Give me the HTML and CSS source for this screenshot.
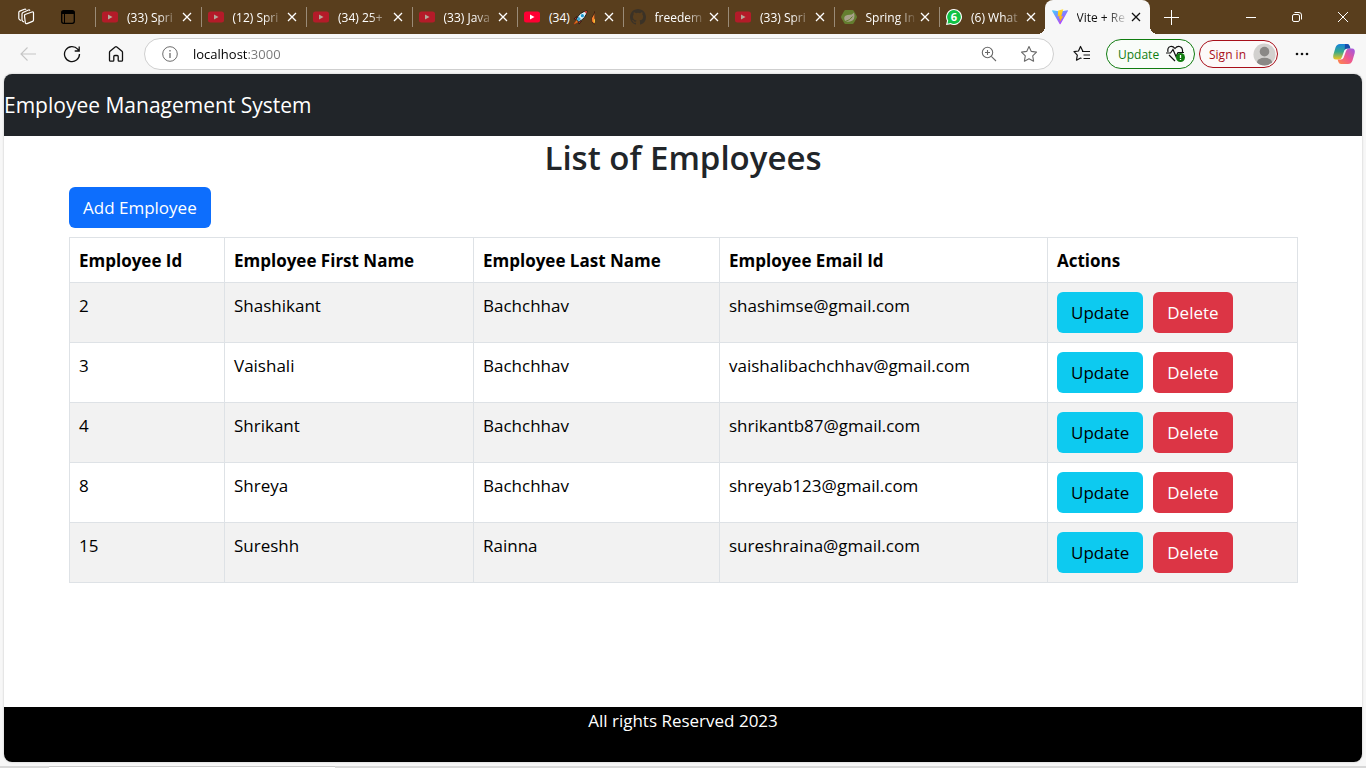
FILE: index.html
```html
<!DOCTYPE html>
<html lang="en">
<head>
<meta charset="utf-8">
<title>Vite + React</title>
<link rel="stylesheet" href="styles.css">
</head>
<body>
<svg class="sprite" aria-hidden="true">
  <symbol id="youtube" viewBox="0 0 16 16"><rect y="2.500" width="16" height="11" rx="2.500" fill="#ff0033"/><path d="M6 5.500v5l4.500-2.500z" fill="#fff"/></symbol>
  <symbol id="cross" viewBox="0 0 10 10"><path d="M1 1l8 8M9 1l-8 8" fill="none" stroke="currentColor" stroke-width="1.300"/></symbol>
  <symbol id="star" viewBox="0 0 18 18"><path d="M9 1.500l2.300 4.900 5.200.7-3.800 3.700.9 5.400L9 13.700l-4.600 2.500.9-5.400L1.500 7.100l5.200-.7z" fill="none" stroke="currentColor" stroke-width="1.100" stroke-linejoin="round"/></symbol>
</svg>

<div class="browser">
  <header class="titlebar">
    <div class="tab-tools">
      <button class="tool" aria-label="Workspaces"><svg width="18" height="18" viewBox="0 0 18 18" fill="none" stroke="#fff" stroke-width="1.200" stroke-linejoin="round"><path d="M8 6.500l7-2.500q1.500-.3 1.500 1v7q0 1-1 1.400l-5.500 2.200q-1.500.4-1.700-1L7.500 8q0-1 .5-1.500z"/><path d="M7 14l-1.200-.7q-.8-.5-.8-1.500V6q0-1 1-1.500L11.500 2q1-.3 1.500.6M4 12.500l-1.300-.8q-.9-.6-.9-1.500V4.500q0-1 1-1.400L7.500 1.200q1-.3 1.600.4"/></svg></button>
      <button class="tool" aria-label="Tab actions"><svg width="16" height="16" viewBox="0 0 16 16"><rect x="1.700" y="1.700" width="12.600" height="12.600" rx="2" fill="none" stroke="#000" stroke-width="1.300"/><path d="M2 2.500h12v2H2z" fill="#000" stroke="#000"/><path d="M4.500 5v9" stroke="#000"/></svg></button>
    </div>
    <nav class="tabs" aria-label="Open tabs">
      <div class="tab idle"><svg class="favicon"><use href="#youtube"/></svg><button class="name">(33) Spri</button><button class="close" aria-label="Close tab"><svg><use href="#cross"/></svg></button></div>
      <div class="tab idle"><svg class="favicon"><use href="#youtube"/></svg><button class="name">(12) Spri</button><button class="close" aria-label="Close tab"><svg><use href="#cross"/></svg></button></div>
      <div class="tab idle"><svg class="favicon"><use href="#youtube"/></svg><button class="name">(34) 25+</button><button class="close" aria-label="Close tab"><svg><use href="#cross"/></svg></button></div>
      <div class="tab idle"><svg class="favicon"><use href="#youtube"/></svg><button class="name">(33) Java</button><button class="close" aria-label="Close tab"><svg><use href="#cross"/></svg></button></div>
      <div class="tab"><svg class="favicon"><use href="#youtube"/></svg><button class="name plain">(34) <svg class="emoji" viewBox="0 0 16 16"><path d="M4 7L1 9.500l3 .5zM9 12l-2.500 3-.5-3.500z" fill="#e23d35" stroke="#111" stroke-width=".7"/><path d="M4 11l-3 4 4-2z" fill="#ff9b25" stroke="#c74415" stroke-width=".8"/><path d="M3.500 10Q7 2 15 1q-1 8-9 11.500z" fill="#dff2fa" stroke="#111" stroke-width=".9"/><path d="M12 1.700L15 1l-.8 3z" fill="#e23d35"/><circle cx="10" cy="6" r="1.700" fill="#1598d4"/><path d="M4 10l2-3 2.500 2.500L6 12z" fill="#39a8d5"/></svg><svg class="emoji flame" viewBox="0 0 4 16"><path d="M4 1.500Q3.500 4 2 6-.5 8.500.6 12q.8 2.300 3.400 3z" fill="#f9822b" stroke="#351b12" stroke-width=".8"/><path d="M4 9q-2.500 3 0 5z" fill="#ffd43b"/></svg></button><button class="close" aria-label="Close tab"><svg><use href="#cross"/></svg></button></div>
      <div class="tab idle"><svg class="favicon" viewBox="0 0 16 16"><path fill="#24292f" d="M8 0C3.580 0 0 3.580 0 8c0 3.540 2.290 6.530 5.470 7.590.4.070.55-.17.55-.38v-1.490c-2.010.37-2.530-.49-2.690-.94-.09-.23-.48-.94-.82-1.130-.28-.15-.68-.52-.01-.53.63-.01 1.080.58 1.230.82.72 1.210 1.870.87 2.330.66.07-.52.28-.87.51-1.070-1.780-.2-3.640-.89-3.640-3.950 0-.87.31-1.590.82-2.150-.08-.2-.36-1.020.08-2.120 0 0 .67-.21 2.200.82a7.600 7.600 0 014 0c1.530-1.040 2.200-.82 2.200-.82.44 1.100.16 1.920.08 2.120.51.56.82 1.270.82 2.150 0 3.070-1.870 3.750-3.650 3.950.29.25.54.73.54 1.480v2.200c0 .21.15.46.55.38A8 8 0 0016 8c0-4.420-3.580-8-8-8z"/></svg><button class="name">freedem</button><button class="close" aria-label="Close tab"><svg><use href="#cross"/></svg></button></div>
      <div class="tab idle"><svg class="favicon"><use href="#youtube"/></svg><button class="name">(33) Spri</button><button class="close" aria-label="Close tab"><svg><use href="#cross"/></svg></button></div>
      <div class="tab idle"><svg class="favicon" viewBox="0 0 16 16"><path d="M4.500 1h7q.8 0 1.200.7l3 5.300q.5 1 0 1.900l-3 5.300q-.4.8-1.200.8h-7q-.8 0-1.200-.8l-3-5.300q-.4-.9 0-1.900l3-5.300Q3.700 1 4.500 1z" fill="#6db33f"/><path d="M13 3.500q2 8-4 9-3 .5-5-.5Q1.500 7 6.500 6q5 0 6.500-2.500z" fill="#e9f3e3"/><path d="M4 12.500q5-1 7.500-5" fill="none" stroke="#6db33f"/></svg><button class="name">Spring In</button><button class="close" aria-label="Close tab"><svg><use href="#cross"/></svg></button></div>
      <div class="tab"><svg class="favicon" viewBox="0 0 16 16"><path d="M8 0A8 8 0 11 4.500 15.200L0 16l1-4.200A8 8 0 018 0z" fill="#fff"/><path d="M8 1.100A6.900 6.900 0 11 4.700 14.100l-3.200.6.700-3.100A6.900 6.900 0 018 1.100z" fill="#11c245"/><text x="8" y="12" text-anchor="middle" class="count">6</text></svg><button class="name">(6) What</button><button class="close" aria-label="Close tab"><svg><use href="#cross"/></svg></button></div>
      <div class="tab active"><svg class="favicon" viewBox="0 0 16 16"><defs><linearGradient id="vp" x1="0" y1="0" x2=".7" y2="1"><stop stop-color="#41d1ff"/><stop offset="1" stop-color="#bd34fe"/></linearGradient><linearGradient id="vy" x1="0" y1="0" x2="0" y2="1"><stop stop-color="#ffdc2e"/><stop offset="1" stop-color="#ffa800"/></linearGradient></defs><path d="M.5 1.200L8.200 2.500l7.300-1.300q.7 0 .4.700L8.600 15q-.5.700-1 0L.1 1.900q-.2-.6.4-.7z" fill="url(#vp)"/><path d="M11.300.3L6.200 1.400l-.5 6 1.800-.3-.5 2.600 1.300-.3-.7 3.900 3.600-6-2 .3z" fill="url(#vy)"/></svg><button class="name">Vite + Re</button><button class="close" aria-label="Close tab"><svg><use href="#cross"/></svg></button></div>
    </nav>
    <div class="window-tools">
      <button class="tool new-tab" aria-label="New tab"><svg width="15" height="15" viewBox="0 0 15 15" stroke="#fff"><path d="M7.500 0v15M0 7.500h15"/></svg></button>
      <button class="tool control" aria-label="Minimize"><svg width="10" height="10" viewBox="0 0 10 10" stroke="#fff"><path d="M0 5.500h10"/></svg></button>
      <button class="tool control" aria-label="Restore"><svg width="10" height="10" viewBox="0 0 10 10" fill="none" stroke="#fff"><rect x=".5" y="2.500" width="7" height="7" rx="1.500"/><path d="M2.500.5H7q2.500 0 2.500 2.500v4.500"/></svg></button>
      <button class="tool control" aria-label="Close"><svg width="10" height="10" viewBox="0 0 10 10" stroke="#fff"><path d="M0 0l10 10M10 0L0 10"/></svg></button>
    </div>
  </header>

  <div class="toolbar">
    <div class="history">
      <button class="tool" aria-label="Back" disabled><svg width="16" height="14" viewBox="0 0 16 14" fill="none" stroke="#c5c5c5" stroke-width="1.100"><path d="M16 7H1M7.500.5L1 7l6.500 6.500"/></svg></button>
      <button class="tool" aria-label="Refresh"><svg width="18" height="18" viewBox="0 0 18 18" fill="none" stroke="#111" stroke-width="1.300"><path d="M16.500 9A7.500 7.500 0 1 1 14.700 4.200L16 6M16.200 1.500V6h-4.500"/></svg></button>
      <button class="tool" aria-label="Home"><svg width="16" height="18" viewBox="0 0 16 18" fill="none" stroke="#111" stroke-width="1.300" stroke-linejoin="round"><path d="M1.500 7.500Q1.500 6.700 2 6.200L7.200 2Q8 1.400 8.800 2L14 6.200q.5.500.5 1.300v7.700q0 1-1 1H11q-.8 0-.8-1V11.500q0-1-1-1H6.800q-1 0-1 1v3.700q0 1-.8 1H2.500q-1 0-1-1z"/></svg></button>
    </div>
    <div class="address">
      <svg width="16" height="16" viewBox="0 0 16 16" fill="none" stroke="#6d6d6d"><circle cx="8" cy="8" r="7.300"/><path d="M8 7v5M8 4v1.500" stroke-width="1.300"/></svg>
      <input class="url" type="text" aria-label="Address" value="localhost:3000">
      <button class="tool" aria-label="Zoom"><svg width="16" height="16" viewBox="0 0 16 16" fill="none" stroke="#696969" stroke-width="1.100"><circle cx="6.500" cy="6.500" r="5.200"/><path d="M10.300 10.300L15 15M6.500 4v5M4 6.500h5"/></svg></button>
      <button class="tool star" aria-label="Add to favorites"><svg width="18" height="18"><use href="#star"/></svg></button>
    </div>
    <button class="tool favorites" aria-label="Favorites"><svg width="18" height="18" viewBox="0 0 18 18" fill="none" stroke="#111" stroke-width="1.200" stroke-linejoin="round"><path d="M10 6.500L7.500 1.500 5.500 6l-4.500.7 3.300 3.500-.8 5L7.500 13l1 .5M9 6.500h8M10.500 10H17M10.500 13.500H17"/></svg></button>
    <button class="pill update">Update <svg width="20" height="18" viewBox="0 0 20 18"><path d="M2 7Q1 2.500 4.500 1.500 7 1 9 3.500q2-2.500 4.500-2Q17 2.500 16.500 7M3 10l6 6" fill="none" stroke="#111" stroke-width="1.200"/><path d="M0 8h4.500L7 4.500l3 7 2-4h6" fill="none" stroke="#111" stroke-width="1.200"/><circle cx="14.500" cy="12.500" r="4.500" fill="#107c10"/><path d="M14.500 10v3M14.500 14v1" stroke="#fff" stroke-width="1.300"/></svg></button>
    <button class="pill signin">Sign in <svg width="23" height="23" viewBox="0 0 24 24"><defs><clipPath id="face"><circle cx="12" cy="12" r="11.500"/></clipPath></defs><g clip-path="url(#face)"><path d="M0 0h24v24H0z" fill="#d2d0ce"/><circle cx="12" cy="9" r="5" fill="#8a8886"/><ellipse cx="12" cy="20.500" rx="8" ry="5" fill="#8a8886"/></g></svg></button>
    <button class="tool more" aria-label="Settings and more"><svg width="14" height="4" viewBox="0 0 14 4" fill="#111"><circle cx="2" cy="2" r="1.300"/><circle cx="7" cy="2" r="1.300"/><circle cx="12" cy="2" r="1.300"/></svg></button>
    <button class="tool copilot" aria-label="Copilot"><svg width="24" height="24" viewBox="0 0 24 24"><defs><linearGradient id="ca" x1="0" y1="0" x2="0" y2="1"><stop stop-color="#1684dc"/><stop offset=".5" stop-color="#35a98c"/><stop offset="1" stop-color="#f2c51e"/></linearGradient><linearGradient id="cb" x1="1" y1="0" x2="0" y2="1"><stop stop-color="#9b58e8"/><stop offset=".5" stop-color="#ee5790"/><stop offset="1" stop-color="#ff8b45"/></linearGradient></defs><path d="M8 2h7q2 0 2.600 2l.8 2.500H15q-2 0-2.700 2L10 15q-.8 2.500-3 2.500H4Q.5 17.500 1.300 13L3.500 5.500Q4.700 2 8 2z" fill="url(#ca)"/><path d="M13 2h2q2 0 2.600 2l.8 2.500H15q-1.500 0-2.300 1.500z" fill="#174cac"/><path d="M16 22H9q-2 0-2.600-2l-.8-2.500H9q2 0 2.700-2L14 9q.8-2.500 3-2.500h3q3.500 0 2.700 4.500l-2.200 7.500Q19.300 22 16 22z" fill="url(#cb)"/></svg></button>
  </div>

  <div class="page">
    <header class="app-header"><a class="brand" href="#">Employee Management System</a></header>
    <main class="content">
      <h1 class="heading">List of Employees</h1>
      <button class="btn primary">Add Employee</button>
      <table class="employees">
        <colgroup><col class="col-id"><col class="col-first"><col class="col-last"><col class="col-email"><col class="col-actions"></colgroup>
        <thead><tr><th>Employee Id</th><th>Employee First Name</th><th>Employee Last Name</th><th>Employee Email Id</th><th>Actions</th></tr></thead>
        <tbody>
          <tr><td>2</td><td>Shashikant</td><td>Bachchhav</td><td>shashimse@gmail.com</td><td class="action-cell"><div class="actions"><button class="btn info">Update</button><button class="btn danger">Delete</button></div></td></tr>
          <tr><td>3</td><td>Vaishali</td><td>Bachchhav</td><td>vaishalibachchhav@gmail.com</td><td class="action-cell"><div class="actions"><button class="btn info">Update</button><button class="btn danger">Delete</button></div></td></tr>
          <tr><td>4</td><td>Shrikant</td><td>Bachchhav</td><td>shrikantb87@gmail.com</td><td class="action-cell"><div class="actions"><button class="btn info">Update</button><button class="btn danger">Delete</button></div></td></tr>
          <tr><td>8</td><td>Shreya</td><td>Bachchhav</td><td>shreyab123@gmail.com</td><td class="action-cell"><div class="actions"><button class="btn info">Update</button><button class="btn danger">Delete</button></div></td></tr>
          <tr><td>15</td><td>Sureshh</td><td>Rainna</td><td>sureshraina@gmail.com</td><td class="action-cell"><div class="actions"><button class="btn info">Update</button><button class="btn danger">Delete</button></div></td></tr>
        </tbody>
      </table>
    </main>
    <footer class="app-footer">All rights Reserved 2023</footer>
  </div>
  <div class="edge"><span class="edge-light"></span></div>
</div>
</body>
</html>
```

FILE: styles.css
```css
* { box-sizing: border-box; }

body {
  margin: 0;
  font-family: "Segoe UI", "Open Sans", "Noto Sans", sans-serif;
  color: #212529;
}

button, input { font: inherit; }
button { border: 0; padding: 0; background: none; color: inherit; }
svg { flex: none; }
.sprite { display: none; }

.browser {
  display: flex;
  flex-direction: column;
  min-height: 100vh;
  background: #f7f7f7;
}

.tool { display: flex; align-items: center; justify-content: center; }

/* Title bar and tabs */
.titlebar { display: flex; height: 34px; background: #593e1d; color: #fff; font-size: 12px; }
.tab-tools { display: flex; flex: none; width: 95px; padding-left: 5px; }
.tab-tools .tool { width: 42px; }
.tabs { display: flex; flex: 1; min-width: 0; }
.tab {
  display: flex;
  flex: 1 1 0;
  align-items: center;
  min-width: 0;
  padding: 0 9px 0 7px;
  background: linear-gradient(#9a8b77, #9a8b77) left center / 1px 20px no-repeat;
}
.favicon { width: 16px; height: 16px; margin-right: 9px; }
.idle .favicon { opacity: .55; }
.count { font: bold 11px "Open Sans", sans-serif; fill: #fff; }
.name {
  display: flex;
  align-items: center;
  flex: 1;
  min-width: 0;
  gap: 3px;
  overflow: hidden;
  white-space: nowrap;
  text-align: left;
  -webkit-mask-image: linear-gradient(to right, #000 60%, transparent);
  mask-image: linear-gradient(to right, #000 60%, transparent);
}
.name.plain { -webkit-mask-image: none; mask-image: none; }
.emoji { width: 15px; height: 15px; }
.flame { width: 4px; }
.close { display: flex; margin-left: 3px; }
.close svg { width: 10px; height: 10px; }
.active {
  position: relative;
  background: #f7f7f7;
  color: #111;
  border-radius: 8px 8px 0 0;
}
.active::before, .active::after {
  content: "";
  position: absolute;
  bottom: 0;
  width: 8px;
  height: 8px;
}
.active::before { right: 100%; background: radial-gradient(circle at 0 0, transparent 8px, #f7f7f7 8px); }
.active::after { left: 100%; background: radial-gradient(circle at 100% 0, transparent 8px, #f7f7f7 8px); }
.window-tools { display: flex; flex: none; width: 216px; }
.new-tab { width: 43px; margin-right: auto; }
.control { width: 46px; }

/* Toolbar */
.toolbar { display: flex; align-items: center; height: 40px; padding: 0 6px; font-size: 12px; }
.history { display: flex; margin-right: 6px; }
.history .tool { width: 44px; height: 32px; }
.address {
  display: flex;
  flex: 1;
  align-items: center;
  min-width: 0;
  height: 32px;
  padding: 0 8px 0 17px;
  border: 1px solid #cfcfcf;
  border-radius: 16px;
  background: #fff;
}
.url {
  flex: 1;
  min-width: 0;
  margin-left: 15px;
  padding: 0;
  border: 0;
  outline: 0;
  font-size: 13px;
  color: transparent;
  background: linear-gradient(to right, #000 54px, #767676 54px);
  -webkit-background-clip: text;
  background-clip: text;
}
.address .tool { width: 32px; height: 28px; }
.address .star { margin-left: 8px; color: #696969; }
.favorites { width: 32px; margin: 0 8px 0 12px; }
.pill {
  display: flex;
  align-items: center;
  justify-content: space-between;
  border: 1px solid;
  border-radius: 15px;
}
.update { width: 89px; height: 30px; margin-right: 4px; padding: 0 8px 0 11px; color: #107c10; background: #f9fcf9; }
.signin { width: 79px; height: 28px; padding: 0 1px 0 9px; color: #a80f1a; background: #fcf9f9; }
.more { width: 32px; margin: 0 10px 0 8px; }
.copilot { width: 32px; }

/* Employee application */
.page {
  display: flex;
  flex: 1;
  flex-direction: column;
  margin: 0 4px 4px;
  overflow: hidden;
  border-radius: 8px;
  background: #fff;
  box-shadow: 0 0 2px #b5b5b5;
  font-size: 17px;
  line-height: 26px;
}
.app-header { display: flex; align-items: center; height: 62px; background: #212529; }
.brand { color: #fff; font-size: 21px; text-decoration: none; }
.content { flex: 1; padding: 1px 65px 24px; }
.heading { margin: 0 0 8px; font-size: 33px; line-height: 42px; font-weight: 600; text-align: center; }
.btn { height: 41px; padding: 0 14px; border-radius: 6px; white-space: nowrap; }
.primary { display: block; margin-bottom: 9px; background: #0d6efd; color: #fff; }
.info { background: #0dcaf0; color: #000; }
.danger { background: #dc3545; color: #fff; }
.employees { width: 100%; border-collapse: collapse; table-layout: fixed; color: #000; }
.employees th, .employees td {
  padding: 10px 9px 8px;
  border: 1px solid #dee2e6;
  text-align: left;
  vertical-align: top;
}
.employees .action-cell { padding: 9px; }
.employees tbody tr:nth-child(odd) { background: #f2f2f2; }
.col-id { width: 155px; }
.col-first { width: 249px; }
.col-last { width: 246px; }
.col-email { width: 328px; }
.col-actions { width: 250px; }
.actions { display: flex; gap: 10px; }
.app-footer { height: 55px; padding-top: 1px; background: #000; color: #fff; text-align: center; }

/* Lower window edge */
.edge { display: flex; height: 2px; padding-left: 49px; background: #d8d8d8; }
.edge-light { width: 286px; border-top: 1px solid #c8c8c8; background: #fff; }
```
